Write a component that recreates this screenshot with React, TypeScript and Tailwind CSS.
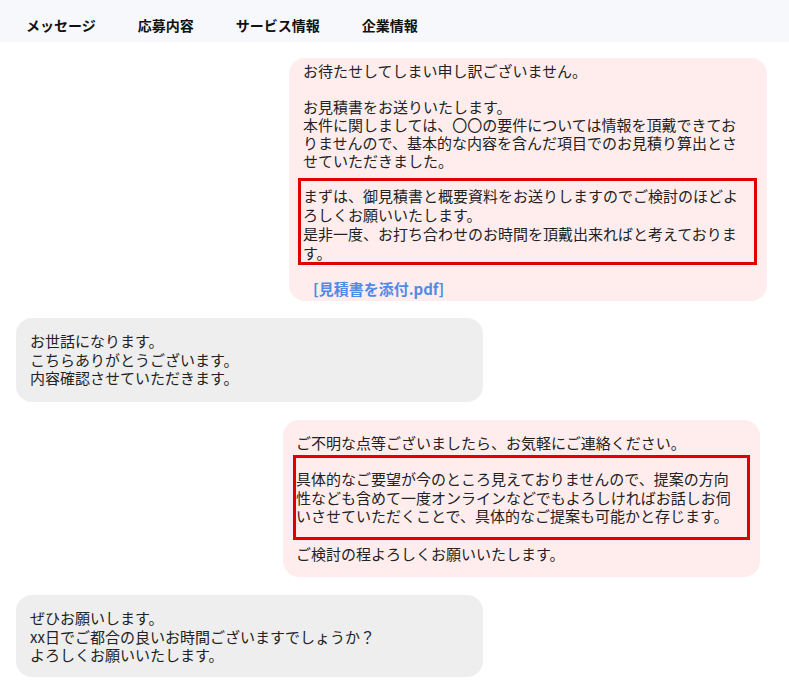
import React from "react";

const font = { fontFamily: '"Noto Sans CJK JP", "Noto Sans", sans-serif' };

const navItems = ["メッセージ", "応募内容", "サービス情報", "企業情報"];

function Header() {
  return (
    <div className="h-[42px] bg-[#f7f8fb] flex gap-[42px] pl-[26px] pt-[16px]">
      {navItems.map((item) => (
        <span key={item} className="text-[14px] leading-[18px] font-bold text-[#111]">
          {item}
        </span>
      ))}
    </div>
  );
}

function App() {
  return (
    <div className="w-[789px] h-[694px] overflow-hidden bg-white text-[#222]" style={font}>
      <Header />
      <div className="flex flex-col pt-[16px] text-[15px]">
        {/* sent: estimate */}
        <div className="self-end mr-[22px] w-[478px] rounded-[16px] bg-[#ffeded] pl-[14px] pr-[20px] pt-[4px] pb-[3px]">
          <div className="leading-[18px]">
            <p>お待たせしてしまい申し訳ございません。</p>
            <p>&nbsp;</p>
            <p>お見積書をお送りいたします。</p>
            <p>
              本件に関しましては、〇〇の要件については情報を頂戴できておりませんので、基本的な内容を含んだ項目でのお見積り算出とさせていただきました。
            </p>
          </div>
          <div className="mt-[8px] -ml-[5px] w-[459px] border-[3px] border-[#e00000] pl-[2px] pr-[7px] pt-[5px] leading-[19px]">
            <p>まずは、御見積書と概要資料をお送りしますのでご検討のほどよろしくお願いいたします。</p>
            <p>是非一度、お打ち合わせのお時間を頂戴出来ればと考えております。</p>
          </div>
          <p className="mt-[15px] ml-[10px] leading-[18px] font-bold text-[#4f8ae8]">[見積書を添付.pdf]</p>
        </div>

        {/* received */}
        <div className="mt-[17px] ml-[16px] w-[467px] rounded-[16px] bg-[#eeeeee] px-[14px] pt-[14px] pb-[14px] leading-[18.5px]">
          <p>お世話になります。</p>
          <p>こちらありがとうございます。</p>
          <p>内容確認させていただきます。</p>
        </div>

        {/* sent: proposal */}
        <div className="self-end mt-[18px] mr-[29px] w-[477px] rounded-[16px] bg-[#ffeded] pl-[13px] pr-[20px] pt-[14px] pb-[14px] leading-[18.5px]">
          <p>ご不明な点等ございましたら、お気軽にご連絡ください。</p>
          <div className="mt-[3px] -ml-[3px] w-[457px] border-[3px] border-[#e00000] pl-0 pr-[7px] pt-[12px] pb-[11px]">
            <p>
              具体的なご要望が今のところ見えておりませんので、提案の方向性なども含めて一度オンラインなどでもよろしければお話しお伺いさせていただくことで、具体的なご提案も可能かと存じます。
            </p>
          </div>
          <p className="mt-[5px]">ご検討の程よろしくお願いいたします。</p>
        </div>

        {/* received */}
        <div className="mt-[18px] ml-[16px] w-[467px] rounded-[16px] bg-[#eeeeee] px-[14px] pt-[14px] pb-[12px] leading-[18.5px]">
          <p>ぜひお願いします。</p>
          <p>xx日でご都合の良いお時間ございますでしょうか？</p>
          <p>よろしくお願いいたします。</p>
        </div>
      </div>
    </div>
  );
}

export default App;
